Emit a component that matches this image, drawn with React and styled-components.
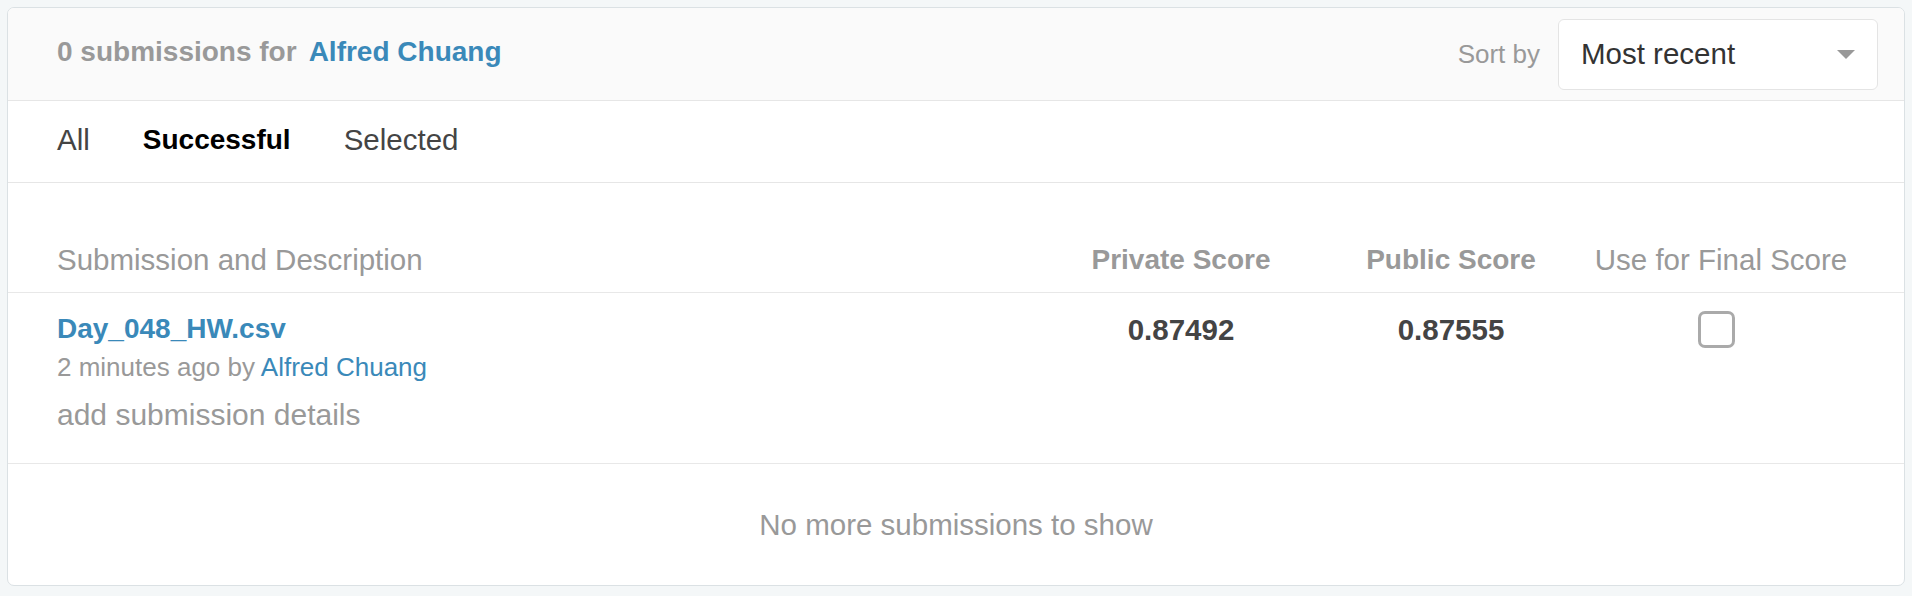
import React from "react";
import styled, { createGlobalStyle } from "styled-components";

const Global = createGlobalStyle`
  html, body { margin: 0; padding: 0; background: #f4f7f8; }
  body { padding: 7px; font-family: "Liberation Sans", Arial, sans-serif; }
  * { box-sizing: border-box; }
`;

const Card = styled.section`
  background: #fff;
  border: 1px solid #dbe1e4;
  border-radius: 7px;
  overflow: hidden;
`;

const Header = styled.header`
  height: 93px;
  display: flex;
  align-items: center;
  justify-content: space-between;
  padding: 0 26px 0 49px;
  background: #fafafa;
  border-bottom: 1px solid #e6e6e6;
`;

const Title = styled.h2`
  margin: 0 0 4px;
  font-size: 28px;
  font-weight: 700;
  color: #999;
  display: flex;
  gap: 12px;
`;

const Link = styled.a`
  color: #3a89b9;
  text-decoration: none;
  font-weight: ${(p) => (p.$bold ? 700 : 400)};
`;

const SortGroup = styled.div`
  display: flex;
  align-items: center;
  gap: 18px;
`;

const SortLabel = styled.span`
  font-size: 26px;
  color: #999;
`;

const Select = styled.div`
  width: 320px;
  height: 71px;
  background: #fff;
  border: 1px solid #e4e4e4;
  border-radius: 6px;
  display: flex;
  align-items: center;
  justify-content: space-between;
  padding: 0 22px 0 22px;
  font-size: 29.5px;
  color: #333;
`;

const Caret = styled.span`
  width: 0;
  height: 0;
  border-left: 9px solid transparent;
  border-right: 9px solid transparent;
  border-top: 9px solid #999;
`;

const Tabs = styled.nav`
  height: 82px;
  display: flex;
  align-items: center;
  gap: 53px;
  padding: 0 49px 4px;
  border-bottom: 1px solid #e6e6e6;
`;

const Tab = styled.span`
  font-size: ${(p) => (p.$active ? "28px" : "29.5px")};
  font-weight: ${(p) => (p.$active ? 700 : 400)};
  color: ${(p) => (p.$active ? "#000" : "#444")};
`;

const Grid = styled.div`
  display: grid;
  grid-template-columns: 1fr 270px 270px 270px;
  align-items: start;
  padding: ${(p) => p.$pad};
  border-bottom: 1px solid #e8e8e8;
`;

const HeadCell = styled.div`
  font-size: ${(p) => (p.$bold ? "28px" : "29.5px")};
  line-height: 34px;
  font-weight: ${(p) => (p.$bold ? 700 : 400)};
  color: #999;
  text-align: ${(p) => (p.$center ? "center" : "left")};
`;

const Desc = styled.div`
  display: flex;
  flex-direction: column;
`;

const FileName = styled(Link)`
  font-size: 28px;
  line-height: 34px;
  margin-top: 1px;
`;

const Meta = styled.div`
  font-size: 26px;
  line-height: 30px;
  color: #999;
  margin-top: 6px;
`;

const Details = styled.div`
  font-size: 30px;
  line-height: 34px;
  color: #999;
  margin-top: 16px;
`;

const Score = styled.div`
  font-size: 29.5px;
  line-height: 34px;
  font-weight: 700;
  color: #444;
  text-align: center;
  margin-top: 2px;
`;

const CheckCell = styled.div`
  display: flex;
  justify-content: center;
  padding-right: 10px;
`;

const Checkbox = styled.span`
  width: 37px;
  height: 37px;
  border: 3px solid #aaa;
  border-radius: 7px;
  background: #fff;
`;

const Footer = styled.div`
  height: 121px;
  display: flex;
  align-items: center;
  justify-content: center;
  font-size: 29.5px;
  color: #999;
`;

export default function App() {
  return (
    <>
      <Global />
      <Card>
        <Header>
          <Title>
            <span>0 submissions for</span>
            <Link $bold href="#">Alfred Chuang</Link>
          </Title>
          <SortGroup>
            <SortLabel>Sort by</SortLabel>
            <Select>
              <span>Most recent</span>
              <Caret />
            </Select>
          </SortGroup>
        </Header>
        <Tabs>
          <Tab>All</Tab>
          <Tab $active>Successful</Tab>
          <Tab>Selected</Tab>
        </Tabs>
        <Grid $pad="60px 48px 15px 49px">
          <HeadCell>Submission and Description</HeadCell>
          <HeadCell $bold $center>Private Score</HeadCell>
          <HeadCell $bold $center>Public Score</HeadCell>
          <HeadCell $center>Use for Final Score</HeadCell>
        </Grid>
        <Grid $pad="18px 48px 31px 49px">
          <Desc>
            <FileName $bold href="#">Day_048_HW.csv</FileName>
            <Meta>
              2 minutes ago by <Link href="#">Alfred Chuang</Link>
            </Meta>
            <Details>add submission details</Details>
          </Desc>
          <Score>0.87492</Score>
          <Score>0.87555</Score>
          <CheckCell>
            <Checkbox />
          </CheckCell>
        </Grid>
        <Footer>No more submissions to show</Footer>
      </Card>
    </>
  );
}
